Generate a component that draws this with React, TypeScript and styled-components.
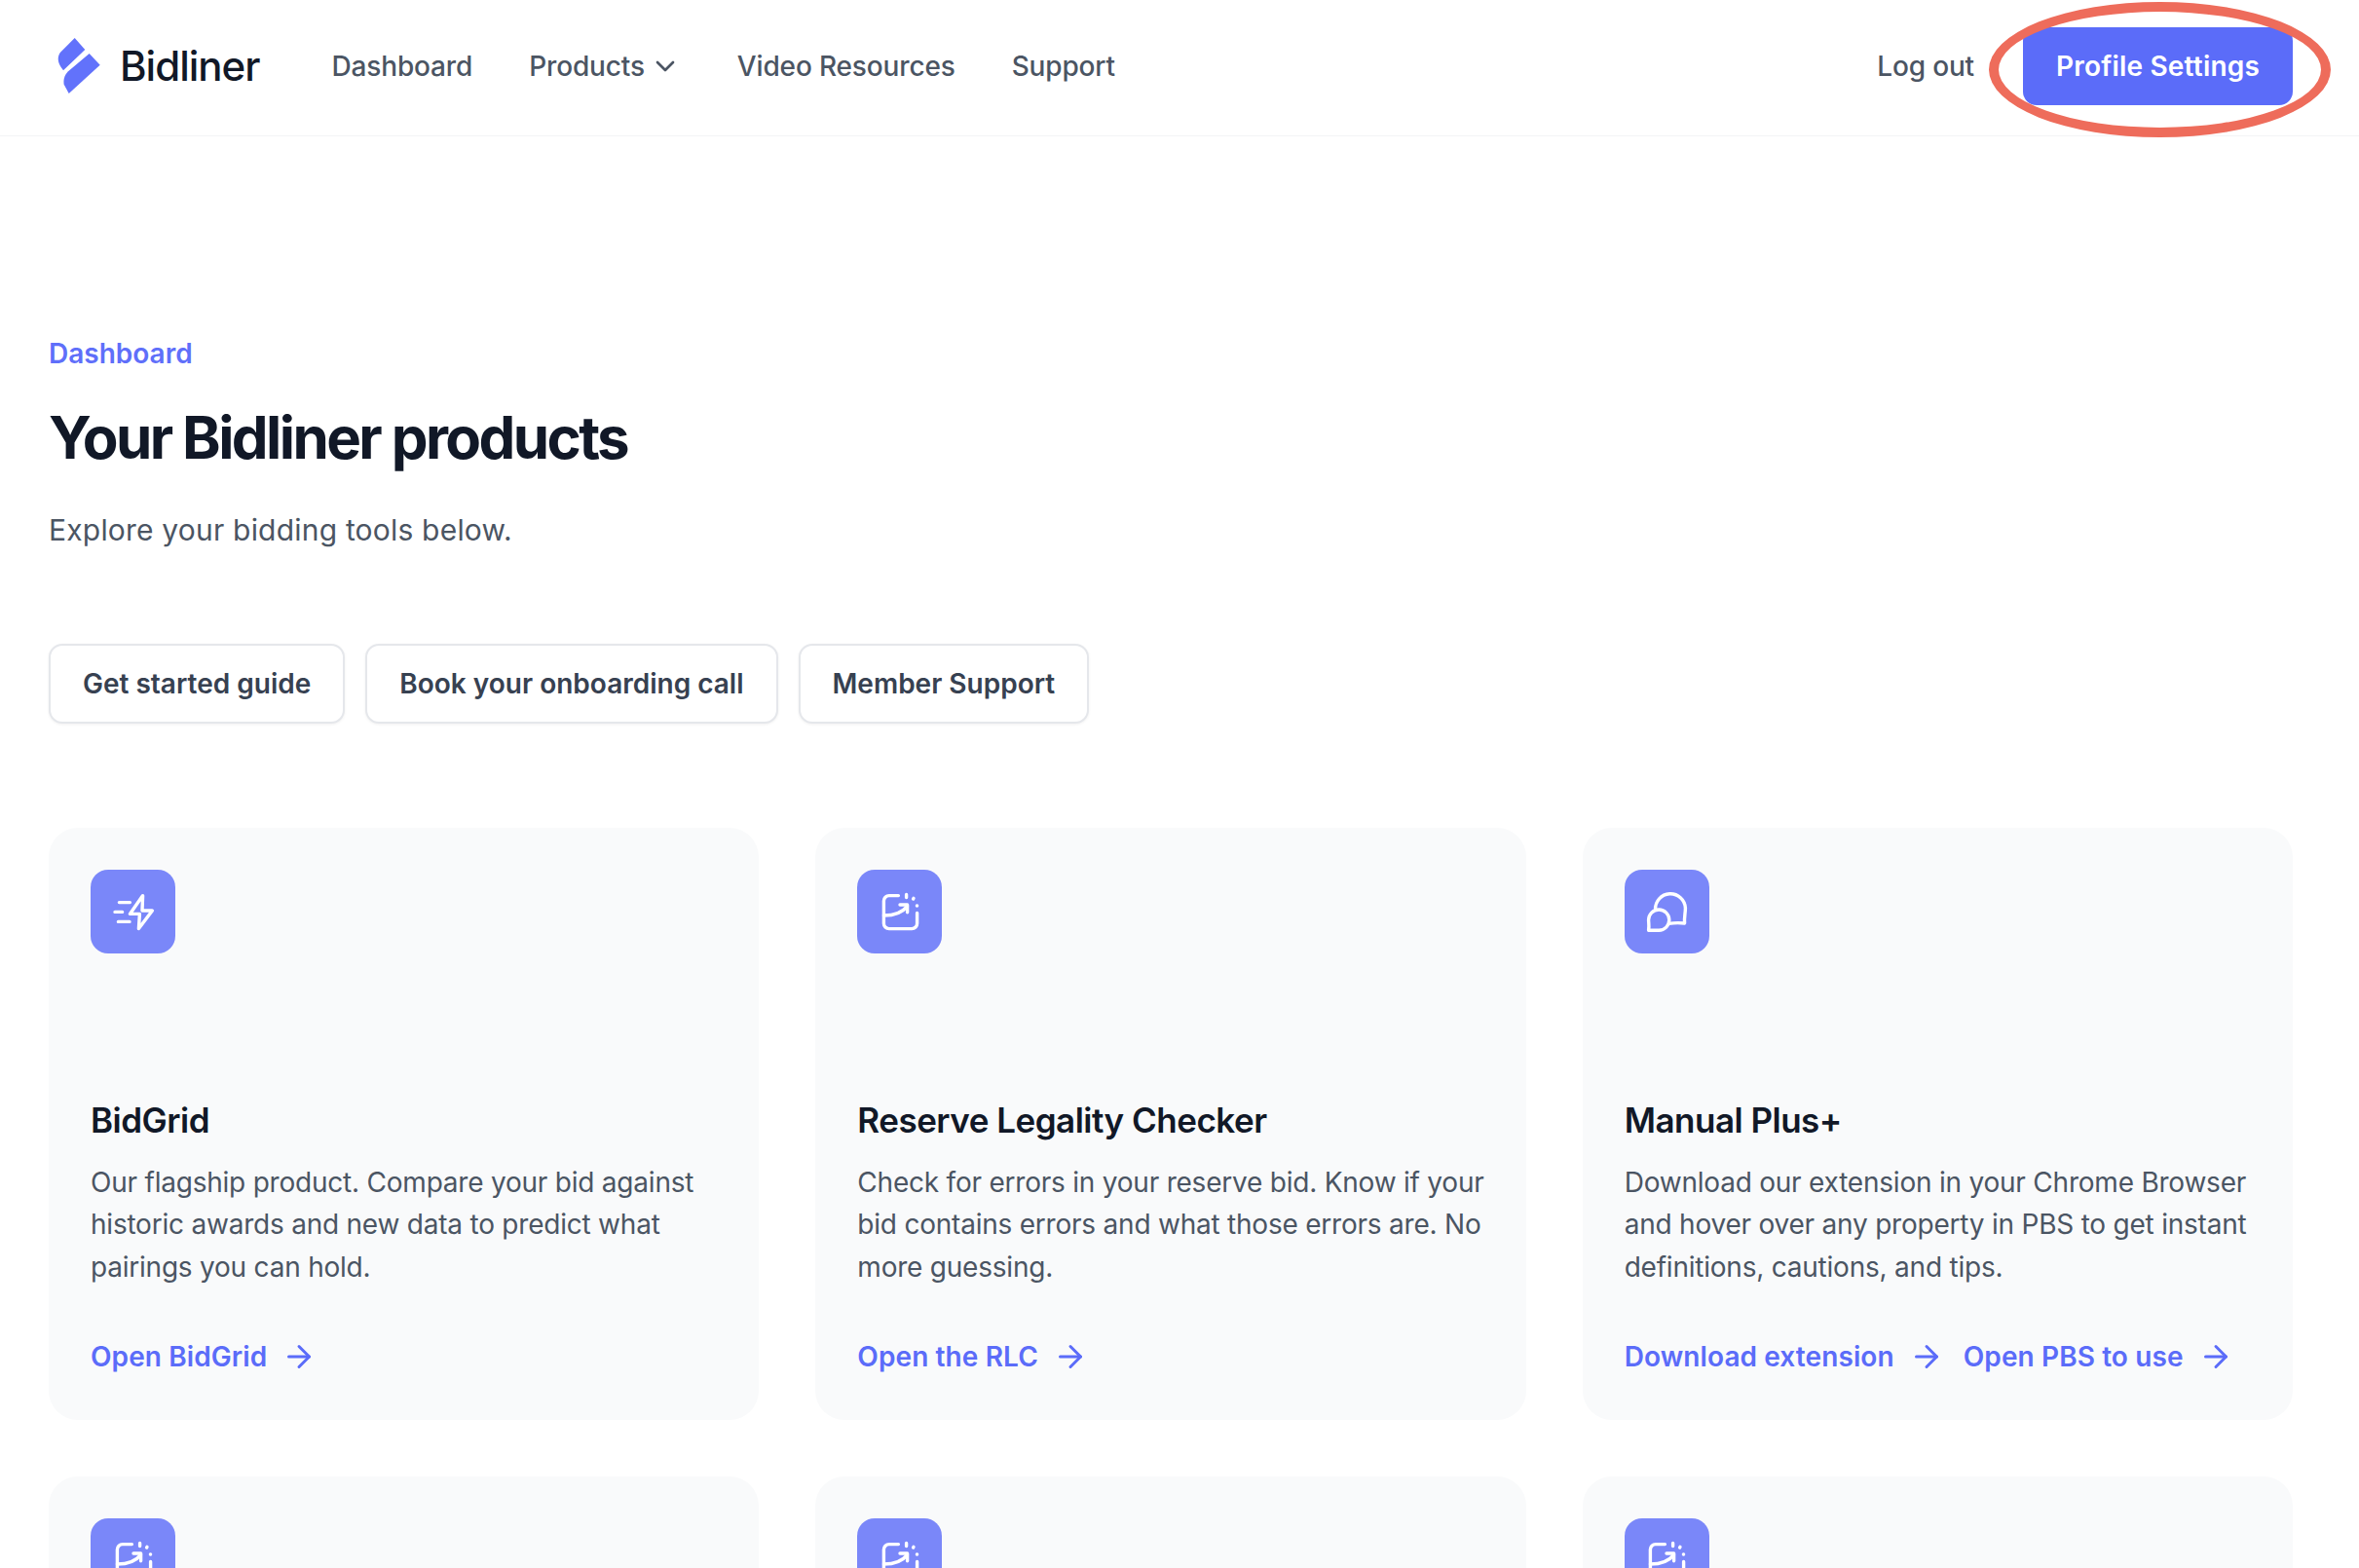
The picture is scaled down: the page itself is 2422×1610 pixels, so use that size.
import React from "react"
import styled, { createGlobalStyle } from "styled-components"
import { ArrowRight, ChevronDown } from "lucide-react"

const GlobalStyle = createGlobalStyle`
  html, body {
    margin: 0;
    height: 100%;
    overflow: hidden;
    background: #fff;
    font-family: Inter, "Liberation Sans", sans-serif;
  }
  * { box-sizing: border-box; }
`

const Page = styled.div`
  position: relative;
  width: 2422px;
  height: 1610px;
  overflow: hidden;
`

const Nav = styled.header`
  display: flex;
  align-items: center;
  height: 140px;
  padding: 0 68px 4px 59px;
  border-bottom: 1px solid #f3f4f6;
`

const Brand = styled.div`
  display: flex;
  align-items: center;
  gap: 20px;
  margin-right: 74px;
  font-size: 42px;
  font-weight: 500;
  letter-spacing: -1px;
  color: #111827;
`

const NavLink = styled.a`
  display: flex;
  align-items: center;
  gap: 5px;
  margin-right: 58px;
  font-size: 28px;
  font-weight: 500;
  letter-spacing: -0.15px;
  color: #4b5563;
`

const Spacer = styled.div`
  flex: 1;
`

const LogOut = styled(NavLink)`
  margin-right: 50px;
`

const ProfileButton = styled.button`
  width: 277px;
  height: 80px;
  border: 0;
  border-radius: 14px;
  background: #5b6cf9;
  color: #fff;
  font: 600 28px Inter, sans-serif;
  letter-spacing: 0.2px;
`

const Annotation = styled.div`
  position: absolute;
  left: 2042px;
  top: 2px;
  width: 351px;
  height: 139px;
  border: 10px solid #ee6c5b;
  border-radius: 50%;
`

const Main = styled.main`
  padding: 203px 68px 0 50px;
`

const Eyebrow = styled.div`
  font-size: 28px;
  line-height: 40px;
  font-weight: 600;
  color: #5f6ffa;
`

const Title = styled.h1`
  margin: 30px 0 0;
  font-size: 60px;
  line-height: 72px;
  font-weight: 700;
  letter-spacing: -2.6px;
  color: #111827;
`

const Lead = styled.p`
  margin: 38.5px 0 0;
  font-size: 30px;
  line-height: 40px;
  letter-spacing: 0.2px;
  color: #4b5563;
`

const Actions = styled.div`
  display: flex;
  gap: 21px;
  margin-top: 97px;
`

const ActionButton = styled.button`
  height: 82px;
  padding: 0 33px;
  border: 2px solid #e5e7eb;
  border-radius: 14px;
  background: #fff;
  box-shadow: 0 1px 3px rgba(0, 0, 0, 0.06);
  color: #374151;
  font: 600 28px Inter, sans-serif;
`

const Grid = styled.div`
  display: grid;
  grid-template-columns: repeat(3, 1fr);
  gap: 58px;
  margin-top: 107px;
`

const Card = styled.section`
  padding: 43px 43px 43px;
  border-radius: 30px;
  background: #f9fafb;
`

const IconBox = styled.div`
  display: flex;
  align-items: center;
  justify-content: center;
  width: 87px;
  height: 86px;
  border-radius: 18px;
  background: #7a87f9;
`

const CardTitle = styled.h2`
  margin: 146px 0 0;
  font-size: 35px;
  line-height: 50px;
  font-weight: 600;
  letter-spacing: -0.5px;
  color: #111827;
`

const CardText = styled.p`
  margin: 18px 0 0;
  font-size: 28px;
  line-height: 43.5px;
  letter-spacing: -0.22px;
  color: #4b5563;
`

const LinkRow = styled.div`
  display: flex;
  gap: 20px;
  margin-top: 48px;
`

const CardLink = styled.a`
  display: flex;
  align-items: center;
  gap: 15px;
  font-size: 28px;
  line-height: 44px;
  font-weight: 600;
  letter-spacing: 0.1px;
  color: #5b6cf9;
`

function BoltIcon() {
  return (
    <svg width="48" height="48" viewBox="0 0 24 24" fill="none" stroke="#fff" strokeWidth="1.7" strokeLinecap="round" strokeLinejoin="round">
      <path d="M16.8 3.8 10.2 13.2h5l-.5 7.6 7-9.3h-5.2z" />
      <path d="M4.7 7.3h5.500M2.500 12.200h3.800M4.200 17.200H10" />
    </svg>
  )
}

function ChartIcon() {
  return (
    <svg width="48" height="48" viewBox="0 0 24 24" fill="none" stroke="#fff" strokeWidth="1.7" strokeLinecap="round" strokeLinejoin="round">
      <path d="M11.200 3.800H6.400a2.700 2.700 0 0 0-2.700 2.700v11.600a2.700 2.700 0 0 0 2.700 2.700h11.700a2.700 2.700 0 0 0 2.700-2.700v-5.400" />
      <path d="M3.700 14c5 0 9.500-1.500 12-4.700" />
      <path d="M12 8.500h3.800v3.900" />
      <path d="M15.300 3.200v1.600M19 5.200l-.2.300M20.700 9h.1" />
    </svg>
  )
}

function BubblesIcon() {
  return (
    <svg width="48" height="48" viewBox="0 0 24 24" fill="none" stroke="#fff" strokeWidth="1.7" strokeLinecap="round" strokeLinejoin="round">
      <path d="M6.300 11A7.700 7.700 0 0 1 21.700 10.200c0 2.800-.7 4.800-.4 7.800-2.800-.3-5.300-.3-8.100.2" />
      <path d="M2.800 21.600h5.300a5.300 5.300 0 1 0-5.300-5.300c0 1.700.4 2.700 0 5.300z" />
    </svg>
  )
}

function Logo() {
  return (
    <svg width="44" height="57" viewBox="0 0 44 57" fill="#6272fb">
      <path d="M17.700 0 28.300 12 6 33.300C2 28 0 24 1 19c.6-2.400 1.500-3.800 3-5.300z" />
      <path d="M32.700 16 43.700 27.700 11.700 57l-5-9.300C6 44 6.500 39 11 34.300z" />
    </svg>
  )
}

function Arrow() {
  return <ArrowRight size={36} strokeWidth={2} />
}

export default function App() {
  return (
    <Page>
      <GlobalStyle />
      <Nav>
        <Brand>
          <Logo />
          Bidliner
        </Brand>
        <NavLink>Dashboard</NavLink>
        <NavLink>
          Products
          <ChevronDown size={32} strokeWidth={2} />
        </NavLink>
        <NavLink>Video Resources</NavLink>
        <NavLink>Support</NavLink>
        <Spacer />
        <LogOut>Log out</LogOut>
        <ProfileButton>Profile Settings</ProfileButton>
      </Nav>
      <Annotation />
      <Main>
        <Eyebrow>Dashboard</Eyebrow>
        <Title>Your Bidliner products</Title>
        <Lead>Explore your bidding tools below.</Lead>
        <Actions>
          <ActionButton>Get started guide</ActionButton>
          <ActionButton>Book your onboarding call</ActionButton>
          <ActionButton>Member Support</ActionButton>
        </Actions>
        <Grid>
          <Card>
            <IconBox><BoltIcon /></IconBox>
            <CardTitle>BidGrid</CardTitle>
            <CardText>Our flagship product. Compare your bid against historic awards and new data to predict what pairings you can hold.</CardText>
            <LinkRow>
              <CardLink>Open BidGrid <Arrow /></CardLink>
            </LinkRow>
          </Card>
          <Card>
            <IconBox><ChartIcon /></IconBox>
            <CardTitle>Reserve Legality Checker</CardTitle>
            <CardText>Check for errors in your reserve bid. Know if your bid contains errors and what those errors are. No more guessing.</CardText>
            <LinkRow>
              <CardLink>Open the RLC <Arrow /></CardLink>
            </LinkRow>
          </Card>
          <Card>
            <IconBox><BubblesIcon /></IconBox>
            <CardTitle>Manual Plus+</CardTitle>
            <CardText>Download our extension in your Chrome Browser and hover over any property in PBS to get instant definitions, cautions, and tips.</CardText>
            <LinkRow>
              <CardLink>Download extension <Arrow /></CardLink>
              <CardLink>Open PBS to use <Arrow /></CardLink>
            </LinkRow>
          </Card>
          <Card><IconBox><ChartIcon /></IconBox></Card>
          <Card><IconBox><ChartIcon /></IconBox></Card>
          <Card><IconBox><ChartIcon /></IconBox></Card>
        </Grid>
      </Main>
    </Page>
  )
}
